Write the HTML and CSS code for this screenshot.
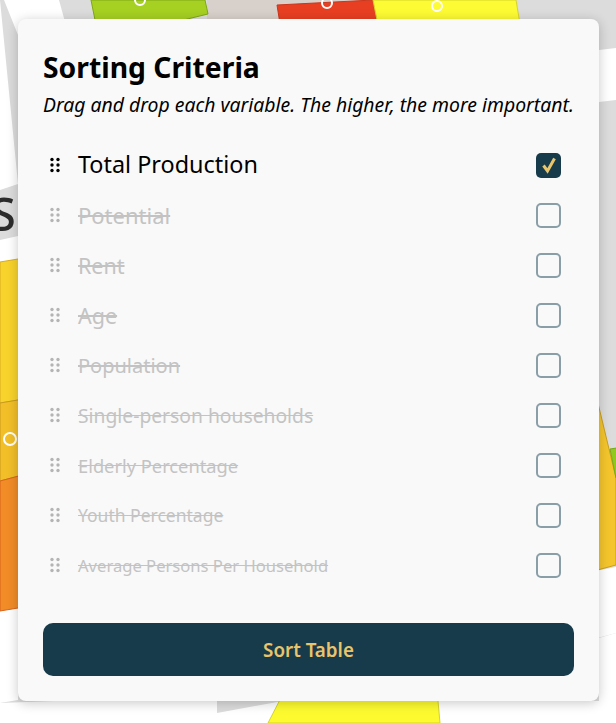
FILE: index.html
```html
<!DOCTYPE html>
<html lang="en">
<head>
<meta charset="utf-8">
<title>Sorting Criteria</title>
<link rel="stylesheet" href="styles.css">
</head>
<body>
<svg class="map" viewBox="0 0 616 723" width="616" height="723" aria-hidden="true">
  <rect width="616" height="723" fill="#fff"/>
  <polygon points="0,0 4,0 20,40 70,40 59,0 616,0 616,48 599,50 599,102 616,100 616,633 599,638 599,701 283,701 217,713 217,723 0,723 0,703 18,700 18,236 0,240 0,190 18,184" fill="#dcdcdc"/>
  <polygon points="207,0 373,0 373,30 207,30" fill="#d8d0cb"/>
  <polygon points="91,0 205,0 208,14 175,22 97,30" fill="#a6d022" stroke="#7fa814"/>
  <polygon points="277,5 373,0 380,30 281,30" fill="#e83f22" stroke="#c9361c"/>
  <polygon points="373,0 516,0 521,30 379,30" fill="#fdfb33" stroke="#d6d32a"/>
  <circle cx="140" cy="0" r="5" class="pin"/>
  <circle cx="327" cy="3" r="5" class="pin"/>
  <circle cx="437" cy="6" r="5" class="pin"/>
  <polygon points="0,262 30,257 30,398 0,403" fill="#f8d32c" stroke="#d8ac20"/>
  <polygon points="0,403 30,398 30,473 0,481" fill="#f2bf28" stroke="#c99a1e"/>
  <polygon points="0,481 30,473 30,606 0,611" fill="#f18c27" stroke="#d8631c"/>
  <circle cx="10" cy="439" r="6" class="pin"/>
  <polygon points="0,703 217,695 217,723 0,723" fill="#fff"/>
  <text x="-9" y="231" class="label">S</text>
  <polygon points="590,572 616,567 616,633 590,640" fill="#fff"/>
  <polygon points="590,370 616,478 616,565 590,572" fill="#f4c52c" stroke="#c99f22"/>
  <polygon points="610,449 630,446 630,480 616,478" fill="#90c81f" stroke="#7aa818"/>
  <polygon points="285,690 437,690 440,723 268,723" fill="#fdfb2f" stroke="#d6d32a"/>
</svg>
<main class="card">
  <h1 class="title">Sorting Criteria</h1>
  <p class="subtitle">Drag and drop each variable. The higher, the more important.</p>
  <ul class="list">
    <li class="row">
      <svg class="grip" viewBox="0 0 10 16" width="10" height="16"><circle cx="2" cy="2.5" r="1.7"/><circle cx="8" cy="2.5" r="1.7"/><circle cx="2" cy="8" r="1.7"/><circle cx="8" cy="8" r="1.7"/><circle cx="2" cy="13.5" r="1.7"/><circle cx="8" cy="13.5" r="1.7"/></svg>
      <span class="name size-total">Total Production</span>
      <span class="box box-on"><svg viewBox="0 0 25 25" width="25" height="25"><path d="M7.5 12.5 L11.5 18 L18.5 5.5" fill="none" stroke="#e9c46a" stroke-width="3"/></svg></span>
    </li>
    <li class="row row-off">
      <svg class="grip" viewBox="0 0 10 16" width="10" height="16"><circle cx="2" cy="2.5" r="1.7"/><circle cx="8" cy="2.5" r="1.7"/><circle cx="2" cy="8" r="1.7"/><circle cx="8" cy="8" r="1.7"/><circle cx="2" cy="13.5" r="1.7"/><circle cx="8" cy="13.5" r="1.7"/></svg>
      <span class="name size-potential">Potential</span><span class="box"></span>
    </li>
    <li class="row row-off">
      <svg class="grip" viewBox="0 0 10 16" width="10" height="16"><circle cx="2" cy="2.5" r="1.7"/><circle cx="8" cy="2.5" r="1.7"/><circle cx="2" cy="8" r="1.7"/><circle cx="8" cy="8" r="1.7"/><circle cx="2" cy="13.5" r="1.7"/><circle cx="8" cy="13.5" r="1.7"/></svg>
      <span class="name size-short">Rent</span><span class="box"></span>
    </li>
    <li class="row row-off">
      <svg class="grip" viewBox="0 0 10 16" width="10" height="16"><circle cx="2" cy="2.5" r="1.7"/><circle cx="8" cy="2.5" r="1.7"/><circle cx="2" cy="8" r="1.7"/><circle cx="8" cy="8" r="1.7"/><circle cx="2" cy="13.5" r="1.7"/><circle cx="8" cy="13.5" r="1.7"/></svg>
      <span class="name size-short">Age</span><span class="box"></span>
    </li>
    <li class="row row-off">
      <svg class="grip" viewBox="0 0 10 16" width="10" height="16"><circle cx="2" cy="2.5" r="1.7"/><circle cx="8" cy="2.5" r="1.7"/><circle cx="2" cy="8" r="1.7"/><circle cx="8" cy="8" r="1.7"/><circle cx="2" cy="13.5" r="1.7"/><circle cx="8" cy="13.5" r="1.7"/></svg>
      <span class="name size-population">Population</span><span class="box"></span>
    </li>
    <li class="row row-off">
      <svg class="grip" viewBox="0 0 10 16" width="10" height="16"><circle cx="2" cy="2.5" r="1.7"/><circle cx="8" cy="2.5" r="1.7"/><circle cx="2" cy="8" r="1.7"/><circle cx="8" cy="8" r="1.7"/><circle cx="2" cy="13.5" r="1.7"/><circle cx="8" cy="13.5" r="1.7"/></svg>
      <span class="name size-single">Single-person households</span><span class="box"></span>
    </li>
    <li class="row row-off">
      <svg class="grip" viewBox="0 0 10 16" width="10" height="16"><circle cx="2" cy="2.5" r="1.7"/><circle cx="8" cy="2.5" r="1.7"/><circle cx="2" cy="8" r="1.7"/><circle cx="8" cy="8" r="1.7"/><circle cx="2" cy="13.5" r="1.7"/><circle cx="8" cy="13.5" r="1.7"/></svg>
      <span class="name size-elderly">Elderly Percentage</span><span class="box"></span>
    </li>
    <li class="row row-off">
      <svg class="grip" viewBox="0 0 10 16" width="10" height="16"><circle cx="2" cy="2.5" r="1.7"/><circle cx="8" cy="2.5" r="1.7"/><circle cx="2" cy="8" r="1.7"/><circle cx="8" cy="8" r="1.7"/><circle cx="2" cy="13.5" r="1.7"/><circle cx="8" cy="13.5" r="1.7"/></svg>
      <span class="name size-youth">Youth Percentage</span><span class="box"></span>
    </li>
    <li class="row row-off">
      <svg class="grip" viewBox="0 0 10 16" width="10" height="16"><circle cx="2" cy="2.5" r="1.7"/><circle cx="8" cy="2.5" r="1.7"/><circle cx="2" cy="8" r="1.7"/><circle cx="8" cy="8" r="1.7"/><circle cx="2" cy="13.5" r="1.7"/><circle cx="8" cy="13.5" r="1.7"/></svg>
      <span class="name size-average">Average Persons Per Household</span><span class="box"></span>
    </li>
  </ul>
  <button class="sort" type="button">Sort Table</button>
</main>
</body>
</html>
```
FILE: styles.css
```css
* { box-sizing: border-box; }
html, body { margin: 0; height: 723px; overflow: hidden; }
body {
  position: relative;
  background: #fff;
  font-family: "Noto Sans", "Open Sans", sans-serif;
  color: #000;
  padding: 19px 17px 0 18px;
}
.map { position: absolute; left: 0; top: 0; filter: blur(0.7px); }
.pin { fill: none; stroke: #fff; stroke-width: 2; }
.label { font-family: "Noto Sans", sans-serif; font-size: 45px; font-weight: 500; fill: #2c2c2c; }
.card {
  position: relative;
  width: 581px;
  height: 682px;
  padding: 29px 25px 25px;
  background: #f9f9f9;
  border-radius: 8px;
  box-shadow: 0 2px 12px rgba(0, 0, 0, 0.22);
  display: flex;
  flex-direction: column;
}
.title { margin: 0; font-size: 28.3px; line-height: 38px; font-weight: 700; }
.subtitle { margin: 6px 0 0; font-size: 19.4px; line-height: 26px; font-style: italic; white-space: nowrap; }
.list { list-style: none; margin: 22px 0 0; padding: 0; }
.row { display: flex; align-items: center; height: 50px; }
.grip { flex: none; margin: 0 18px 0 7px; fill: #000; }
.name { flex: 1; white-space: nowrap; }
.size-total { font-size: 23.4px; margin-bottom: 2px; }
.size-potential { font-size: 22px; }
.size-short { font-size: 21.5px; }
.size-population { font-size: 20px; }
.size-single { font-size: 19.3px; }
.size-elderly { font-size: 18.3px; }
.size-youth { font-size: 17.5px; }
.size-average { font-size: 16.6px; }
.row-off .grip { opacity: 0.27; }
.row-off .name { color: #c3c3c3; text-decoration: line-through; }
.box {
  flex: none;
  width: 25px;
  height: 25px;
  margin-right: 13px;
  border: 2px solid #8a9ea8;
  border-radius: 5px;
}
.box-on { border: 0; background: #173b4b; }
.box-on svg { display: block; }
.sort {
  margin-top: auto;
  height: 53px;
  border: 0;
  border-radius: 10px;
  background: #173b4b;
  color: #e9c46a;
  font: 600 18.8px "Noto Sans", "Open Sans", sans-serif;
}
```
